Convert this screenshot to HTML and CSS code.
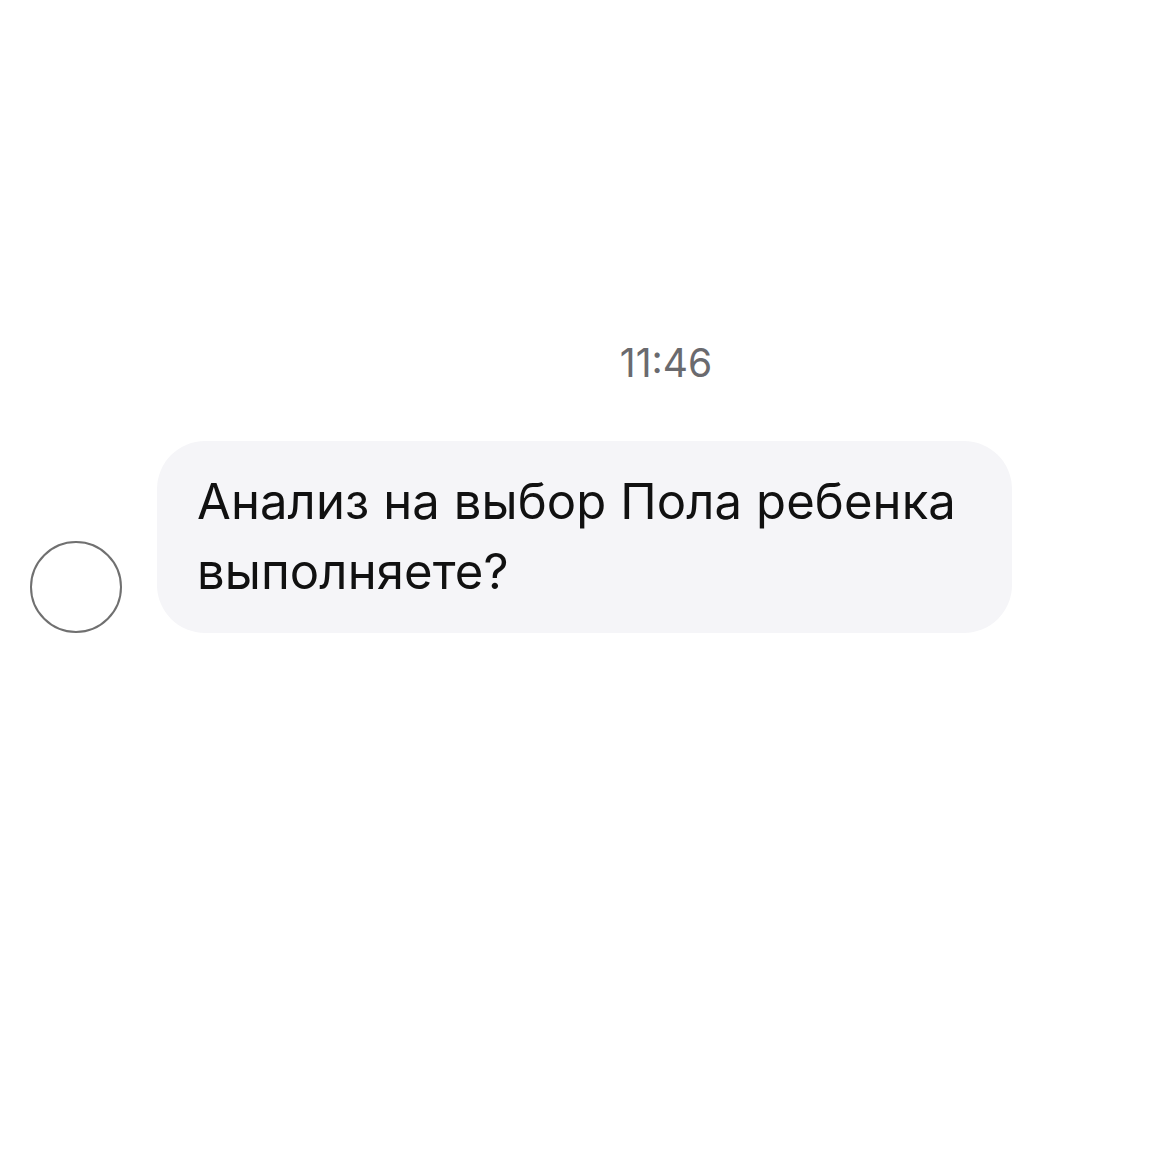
FILE: index.html
```html
<!DOCTYPE html>
<html lang="ru">
<head>
<meta charset="utf-8">
<link rel="stylesheet" href="styles.css">
</head>
<body>
<div class="chat">
  <div class="time">11:46</div>
  <div class="row">
    <div class="avatar"></div>
    <div class="bubble">Анализ на выбор Пола ребенка выполняете?</div>
  </div>
</div>
</body>
</html>
```
FILE: styles.css
```css
html, body {
  margin: 0;
  padding: 0;
  background: #ffffff;
}
body {
  font-family: "Inter", "Roboto", "Liberation Sans", sans-serif;
  width: 1166px;
  height: 1166px;
}
.chat {
  display: flex;
  flex-direction: column;
  padding-top: 337px;
}
.time {
  text-align: center;
  padding-left: 166px;
  font-size: 39px;
  line-height: 52px;
  color: #6a6a6e;
  font-weight: 400;
}
.row {
  display: flex;
  align-items: flex-end;
  gap: 35px;
  padding-left: 30px;
  margin-top: 52px;
}
.avatar {
  width: 88px;
  height: 88px;
  border: 2px solid #707070;
  border-radius: 50%;
  flex: none;
}
.bubble {
  width: 815px;
  padding: 26px 0 26px 40px;
  background: #f5f5f8;
  border-radius: 48px;
  font-size: 49px;
  line-height: 70px;
  letter-spacing: 0.1px;
  color: #111111;
}
```
